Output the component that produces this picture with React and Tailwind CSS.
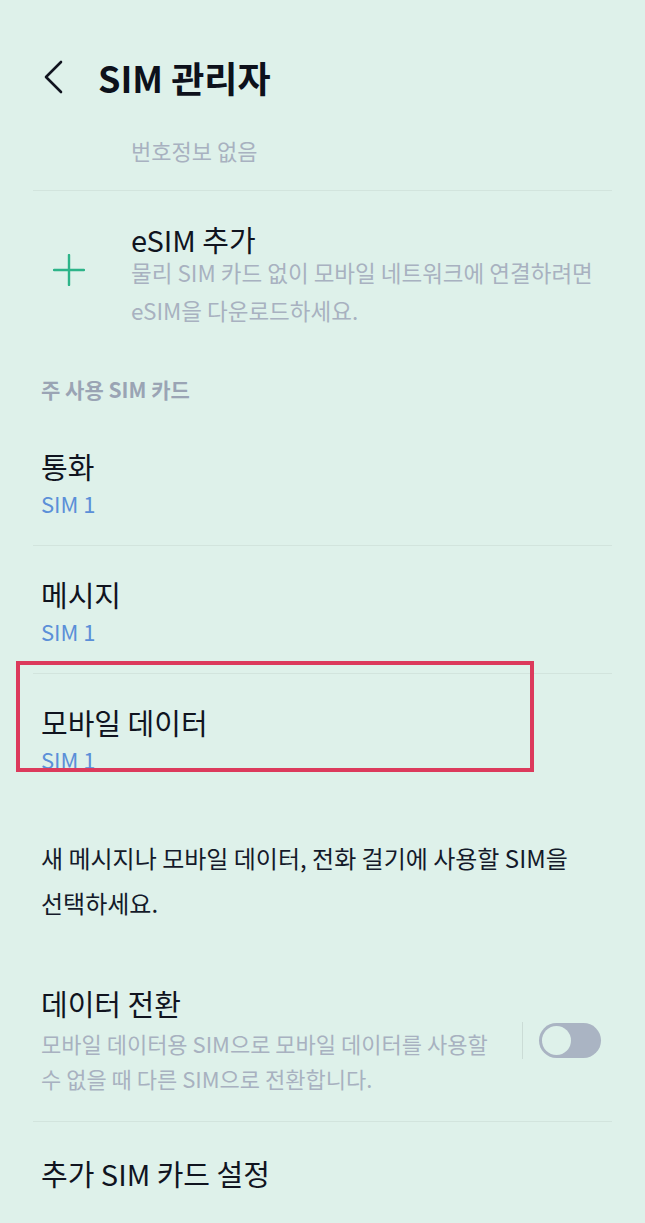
const font = {
  fontFamily: '"Noto Sans CJK KR", "Noto Sans", sans-serif',
};

function Divider() {
  return <div className="h-px bg-[#d2e4dd]" />;
}

function SimRow({ title, first }) {
  return (
    <div className={`pl-[8px] ${first ? "pt-[43px]" : "pt-[29px]"} pb-[24px]`}>
      <div className="text-[29px] leading-[38px] text-[#10141f]">{title}</div>
      <div className="text-[22px] leading-[36px] text-[#5b8fd8]">SIM 1</div>
    </div>
  );
}

export default function App() {
  return (
    <div
      className="relative min-h-[1223px] w-[645px] overflow-hidden bg-[#def1ea]"
      style={font}
    >
      {/* header */}
      <div className="mt-[49px] flex h-[56px] items-center">
        <div className="flex w-[98px] justify-start pl-[42px]">
          <svg width="22" height="34" viewBox="0 0 22 34" fill="none">
            <path
              d="M19 2 L4 17 L19 32"
              stroke="#10141f"
              strokeWidth="2.6"
              strokeLinecap="round"
              strokeLinejoin="round"
            />
          </svg>
        </div>
        <h1 className="text-[36px] font-bold leading-[40px] text-[#0d111b]">
          SIM 관리자
        </h1>
      </div>

      <div className="px-[33px]">
        <div className="mt-[30px] pl-[98px] text-[22px] leading-[30px] text-[#a8b1c0]">
          번호정보 없음
        </div>
        <div className="mt-[25px]">
          <Divider />
        </div>

        {/* eSIM add */}
        <div className="flex pt-[34px]">
          <div className="w-[98px] shrink-0 pl-[20px] pt-[29px]">
            <svg width="32" height="32" viewBox="0 0 32 32">
              <path
                d="M16 1 V31 M1 16 H31"
                stroke="#2db489"
                strokeWidth="2.4"
                strokeLinecap="round"
              />
            </svg>
          </div>
          <div>
            <div className="text-[29px] leading-[28px] text-[#10141f]">
              eSIM 추가
            </div>
            <div className="text-[22.5px] leading-[38px] text-[#a8b1c0]">
              물리 SIM 카드 없이 모바일 네트워크에 연결하려면
              <br />
              eSIM을 다운로드하세요.
            </div>
          </div>
        </div>

        <div className="mt-[45px] pl-[8px] text-[21px] font-semibold leading-[30px] text-[#9aa4b4]">
          주 사용 SIM 카드
        </div>

        <SimRow title="통화" first />
        <Divider />
        <SimRow title="메시지" />
        <Divider />
        <SimRow title="모바일 데이터" />

        <div className="mt-[34px] pl-[8px] text-[24px] leading-[45px] text-[#141a2a]">
          새 메시지나 모바일 데이터, 전화 걸기에 사용할 SIM을
          <br />
          선택하세요.
        </div>

        {/* data switch */}
        <div className="mt-[59px] flex items-center pb-[25px] pl-[8px]">
          <div className="flex-1">
            <div className="text-[29px] leading-[38px] text-[#10141f]">
              데이터 전환
            </div>
            <div className="mt-[4px] text-[22px] leading-[35px] text-[#a8b1c0]">
              모바일 데이터용 SIM으로 모바일 데이터를 사용할
              <br />
              수 없을 때 다른 SIM으로 전환합니다.
            </div>
          </div>
          <div className="flex items-center gap-[16px] pr-[11px]">
            <div className="h-[37px] w-px bg-[#cbdcd6]" />
            <div className="flex h-[35px] w-[62px] items-center rounded-full bg-[#aab4c3] px-[3px]">
              <div className="h-[29px] w-[29px] rounded-full bg-[#def1ea]" />
            </div>
          </div>
        </div>
        <Divider />

        <div className="pl-[8px] pt-[32px] text-[29px] leading-[38px] text-[#10141f]">
          추가 SIM 카드 설정
        </div>
      </div>

      {/* highlight annotation */}
      <div className="pointer-events-none absolute left-[16px] top-[661px] h-[111px] w-[518px] border-[4px] border-[#dc3a5c]" />
    </div>
  );
}
